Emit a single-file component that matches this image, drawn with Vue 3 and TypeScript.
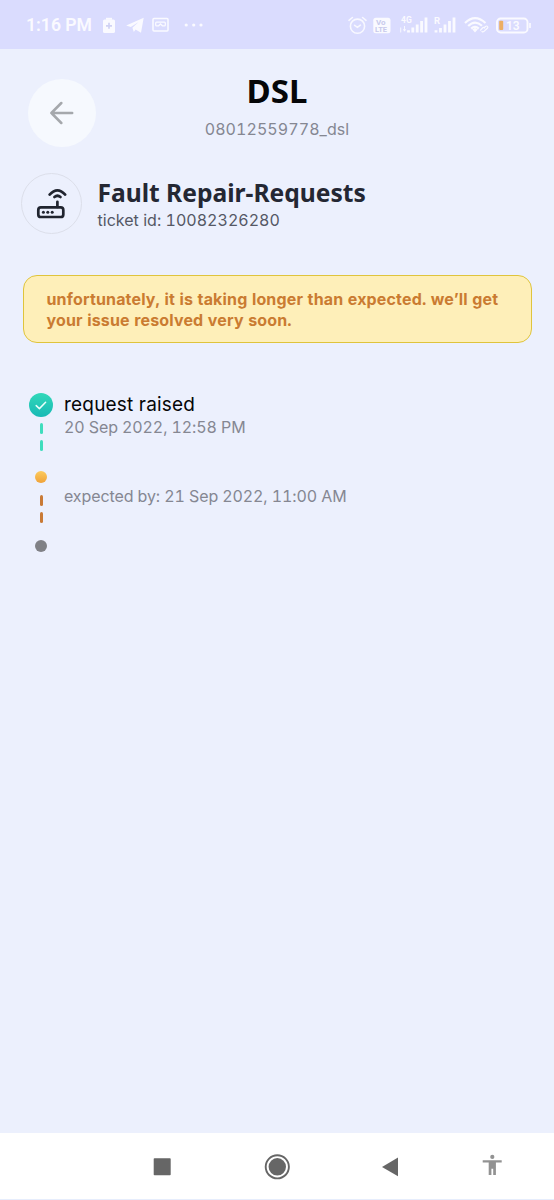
<script setup lang="ts">
interface Step {
  kind: 'done' | 'active' | 'pending'
  title: string
  note: string
}

const steps: Step[] = [
  { kind: 'done', title: 'request raised', note: '20 Sep 2022, 12:58 PM' },
  { kind: 'active', title: '', note: 'expected by: 21 Sep 2022, 11:00 AM' },
  { kind: 'pending', title: '', note: '' },
]
</script>

<template>
  <div class="screen">
    <header class="status">
      <span class="clock">1:16 PM</span>
      <svg class="i-clip" width="14" height="17" viewBox="0 0 14 17">
        <path d="M4 0.8h6v2H4z" fill="#fafaff" />
        <rect x="1" y="2.5" width="12" height="13.5" rx="1.6" fill="#fafaff" />
        <path d="M7 5.8v6M4 8.8h6" stroke="#d0d2f4" stroke-width="1.7" />
      </svg>
      <svg class="i-send" width="18" height="17" viewBox="0 0 18 17">
        <path d="M0.2 8.4 17.7 0.8 15 15.8 9.6 12.6 7.8 14.9 6.4 10.8 12.6 5 4.8 10z" fill="#fafaff" />
      </svg>
      <svg class="i-vr" width="17" height="16" viewBox="0 0 17 16">
        <rect x="1" y="1.5" width="15" height="12.6" rx="1" fill="none" stroke="#fafaff" stroke-width="1.5" />
        <path d="M4.6 5.2h7.8q.9 0 .9.9v1.8q0 .9-.9.9H10.4L8.5 7 6.6 8.8H4.6q-.9 0-.9-.9V6.1q0-.9.9-.9z" fill="none" stroke="#fafaff" stroke-width="1.3" />
      </svg>
      <svg class="i-more" width="20" height="16" viewBox="0 0 20 16">
        <g fill="#fafaff">
          <circle cx="2.2" cy="8" r="1.6" /><circle cx="9.7" cy="8" r="1.6" /><circle cx="17" cy="8" r="1.6" />
        </g>
      </svg>
      <span class="grow"></span>
      <svg class="i-alarm" width="19" height="19" viewBox="0 0 19 19">
        <g fill="none" stroke="#f8f8ff" stroke-width="1.6" stroke-linecap="round">
          <circle cx="9.5" cy="10.2" r="7.1" />
          <path d="M1 4.3 4.4 1.5M18 4.3 14.6 1.5M6.6 9.3l2.8 2 3-2.2" />
        </g>
      </svg>
      <svg class="i-volte" width="18" height="17" viewBox="0 0 18 17">
        <rect x="0.3" y="0.8" width="17.2" height="15.4" rx="2.5" fill="#fafaff" />
        <g class="mini" fill="#c8caec">
          <text x="3" y="8" font-size="8">Vo</text>
          <text x="2" y="15.2" font-size="7.5">LTE</text>
        </g>
      </svg>
      <svg class="i-sig1" width="28" height="18" viewBox="0 0 28 18">
        <text class="mini" x="1" y="7" font-size="8.5" fill="#fafaff">4G</text>
        <path d="M0.7 16.5v-5M4.5 10v5M3.4 13.2l1.1 2 1.1-2" stroke="#fafaff" stroke-width="0.9" fill="none" />
        <path d="M8.5 16.5v-2.2M12.8 16.5v-5M17.2 16.5V8.5M21.6 16.5V5M26 16.5V1.5" stroke="#fafaff" stroke-width="2.8" />
      </svg>
      <svg class="i-sig2" width="22" height="18" viewBox="0 0 22 18">
        <text class="mini" x="0" y="7.6" font-size="9.5" fill="#fafaff">R</text>
        <path d="M2 16.5v-2.2M6.5 16.5v-4.5M11 16.5V8.5M15.5 16.5V5M20 16.5V1.5" stroke="#fafaff" stroke-width="2.8" />
      </svg>
      <svg class="i-wifi" width="25" height="18" viewBox="0 0 25 18">
        <g fill="none" stroke="#fafaff" stroke-width="2.2">
          <path d="M1 7Q11 -2.8 21.5 7M4.2 10Q11 3.2 18 9.8M7.2 12.6Q11 9 14.8 12.6" />
          <path d="M16.5 14.2l2-2.2q1.2-1.2 2 0M20.5 11.5l1-1q1.2-1 2 0t-.2 1.8l-3.5 3.3q-1 .7-1.8-.1" stroke-width="1.2" stroke-linecap="round" />
        </g>
        <path d="M8.4 13.6 11 11.8l2.8 1.8L11 16.5z" fill="#fafaff" />
      </svg>
      <svg class="i-batt" width="36" height="17" viewBox="0 0 36 17">
        <rect x="1" y="1.5" width="30.5" height="14" rx="3.6" fill="none" stroke="#fafaff" stroke-width="1.9" />
        <path d="M34 5.9v5" stroke="#fafaff" stroke-width="1.7" />
        <rect x="3.2" y="3.8" width="4" height="9.2" rx="1" fill="#ecae62" />
        <text class="pct" x="10" y="12.6" font-size="12">13</text>
      </svg>
    </header>

    <main class="body">
      <div class="top">
        <button class="back" aria-label="Back">
          <svg width="24" height="24" viewBox="0 0 24 24">
            <path d="M22.2 12H1.4M11.3 2 1.4 12l9.9 10" fill="none" stroke="#a5a8ac" stroke-width="2.5" stroke-linecap="round" stroke-linejoin="round" />
          </svg>
        </button>
        <div class="heading">
          <h1>DSL</h1>
          <p>08012559778_dsl</p>
        </div>
      </div>

      <section class="ticket">
        <div class="badge">
          <svg width="32" height="32" viewBox="0 0 32 32">
            <g fill="none" stroke="#20242f" stroke-width="2.7" stroke-linecap="round">
              <rect x="2.3" y="19.3" width="25" height="9.7" rx="2.6" />
              <path d="M21.4 13.8v5.2M13.6 6.6Q21.4-1.9 29.2 6.6" />
              <path d="M18.4 9Q21.4 6.5 24.5 9" />
            </g>
            <g fill="#20242f">
              <circle cx="7.4" cy="24.2" r="1.5" /><circle cx="11.8" cy="24.2" r="1.5" /><circle cx="16.2" cy="24.2" r="1.5" />
            </g>
          </svg>
        </div>
        <div class="ticket-text">
          <h2>Fault Repair-Requests</h2>
          <p>ticket id: 10082326280</p>
        </div>
      </section>

      <div class="notice">
        <p>unfortunately, it is taking longer than expected. we’ll get</p>
        <p>your issue resolved very soon.</p>
      </div>

      <ol class="steps">
        <li v-for="step in steps" :key="step.kind" :class="['step', step.kind]">
          <div class="rail">
            <span class="dot">
              <svg v-if="step.kind === 'done'" width="12" height="9" viewBox="0 0 12 9">
                <path d="M1.2 4.6 4.4 7.6 10.6 1.3" fill="none" stroke="#eafffb" stroke-width="1.5" stroke-linecap="round" stroke-linejoin="round" />
              </svg>
            </span>
            <template v-if="step.kind !== 'pending'">
              <i class="dash"></i>
              <i class="dash"></i>
            </template>
          </div>
          <div class="info">
            <h3 v-if="step.title">{{ step.title }}</h3>
            <p v-if="step.note">{{ step.note }}</p>
          </div>
        </li>
      </ol>
    </main>

    <nav class="nav">
      <svg width="554" height="67" viewBox="0 0 554 67">
        <rect x="153.7" y="25.3" width="17" height="17" rx="0.8" fill="#666" />
        <circle cx="277.3" cy="33.8" r="11.6" fill="none" stroke="#666" stroke-width="1.9" />
        <circle cx="277.3" cy="33.8" r="8.7" fill="#666" />
        <path d="M382 33.9 398 24.6v18.6z" fill="#666" />
        <g fill="#929292">
          <circle cx="492.3" cy="23.9" r="2.1" />
          <path d="M482.7 27.2h19v2.3h-5.8v12.6h-2.7v-6.3h-1.8v6.3h-2.7V29.5h-6z" />
        </g>
      </svg>
    </nav>
  </div>
</template>

<style>
body {
  margin: 0;
  background: #ecf0fd;
}
</style>

<style scoped>
.screen {
  width: 554px;
  height: 1200px;
  display: flex;
  flex-direction: column;
  overflow: hidden;
  background: #ecf0fd;
  font-family: Inter, "Noto Sans", sans-serif;
  font-variant-numeric: tabular-nums;
}
h1, h2, h3, p, ol {
  margin: 0;
  padding: 0;
  font-weight: 400;
  white-space: nowrap;
}
h1, h2 {
  font-family: "Noto Sans", "Open Sans", sans-serif;
}
svg {
  display: block;
  flex: none;
}
.status {
  height: 49px;
  flex: none;
  box-sizing: border-box;
  padding: 1px 22px 0 26px;
  display: flex;
  align-items: center;
  background: #dadcfe;
}
.clock {
  width: 66px;
  font: 600 17.6px/20px Roboto, sans-serif;
  color: #fafaff;
  white-space: nowrap;
}
.mini {
  font-family: Roboto, sans-serif;
  font-weight: 700;
}
.pct {
  font-family: Roboto, sans-serif;
  font-weight: 600;
  fill: #fafaff;
}
.i-clip { margin-left: 10px; }
.i-send { margin-left: 10px; }
.i-vr { margin-left: 8px; }
.i-more { margin-left: 15px; }
.grow { flex: 1; }
.i-volte { margin-left: 6px; }
.i-sig1 { margin-left: 9px; }
.i-sig2 { margin-left: 6px; }
.i-wifi { margin-left: 8px; }
.i-batt { margin-left: 7px; }
.body {
  flex: 1;
  padding-top: 21px;
}
.top {
  display: grid;
  grid-template-columns: 96px 1fr 96px;
  height: 86px;
}
.back {
  width: 68px;
  height: 68px;
  margin: 9px 0 0 28px;
  padding: 0;
  border: 0;
  border-radius: 50%;
  background: #f6f9fe;
  display: flex;
  align-items: center;
  justify-content: center;
}
.heading {
  text-align: center;
}
.heading h1 {
  font-size: 33px;
  line-height: 42px;
  font-weight: 700;
  color: #050608;
}
.heading p {
  margin-top: 6px;
  font-size: 16px;
  line-height: 22px;
  letter-spacing: 0.07px;
  color: #858792;
}
.ticket {
  display: flex;
  margin: 17px 0 0 21px;
  height: 61px;
}
.badge {
  width: 59px;
  height: 59px;
  border: 1px solid #dcdfea;
  border-radius: 50%;
  display: flex;
  align-items: center;
  justify-content: center;
}
.ticket-text {
  margin-left: 15.5px;
}
.ticket-text h2 {
  margin-top: 4px;
  font-size: 24.6px;
  line-height: 32px;
  font-weight: 700;
  color: #242733;
}
.ticket-text p {
  font-size: 16px;
  line-height: 22px;
  letter-spacing: 0.02px;
  color: #555865;
}
.notice {
  box-sizing: border-box;
  width: 509px;
  height: 68px;
  margin: 41px 0 0 22.5px;
  padding: 13px 0 0 23px;
  border: 1.5px solid #dfc43c;
  border-radius: 14px;
  background: #feefb9;
}
.notice p {
  font-size: 16px;
  line-height: 21px;
  letter-spacing: 0.16px;
  font-weight: 700;
  color: #ca7b31;
}
.steps {
  list-style: none;
  margin: 50px 0 0 29px;
}
.step {
  display: flex;
}
.rail {
  width: 24px;
  display: flex;
  flex-direction: column;
  align-items: center;
}
.dot {
  width: 12px;
  height: 12px;
  border-radius: 50%;
  background: #808186;
  display: flex;
  align-items: center;
  justify-content: center;
}
.dash {
  width: 3px;
  height: 11px;
  border-radius: 1.5px;
  margin-top: 6px;
}
.done { height: 78px; }
.done .dot {
  width: 24px;
  height: 24px;
  background: linear-gradient(#32d8b9, #17b9b5);
}
.done .dash { background: #3fddbd; }
.active { height: 69px; }
.active .dot {
  background: linear-gradient(#fccb5e, #f0a238);
}
.active .dash { background: #c97a36; }
.active .dot + .dash { margin-top: 12px; }
.info {
  padding-left: 11px;
}
.info h3 {
  margin-top: -1px;
  font-size: 19px;
  line-height: 26px;
  letter-spacing: 0.2px;
  color: #050608;
}
.info p {
  margin-top: -2px;
  font-size: 16px;
  line-height: 22px;
  letter-spacing: -0.1px;
  color: #858792;
}
.active .info p { margin-top: 14px; }
.nav {
  height: 67px;
  flex: none;
  box-sizing: border-box;
  background: #fff;
  border-bottom: 1px solid #e6edfc;
}
</style>
